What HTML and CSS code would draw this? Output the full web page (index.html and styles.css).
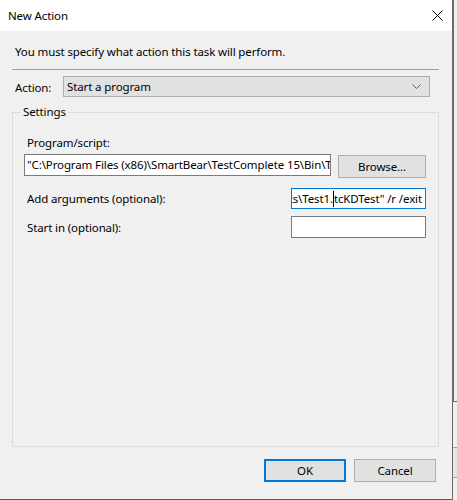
FILE: index.html
```html
<!DOCTYPE html>
<html>
<head>
<meta charset="utf-8">
<link rel="stylesheet" href="styles.css">
</head>
<body>
<div class="screen">
  <div class="window">
    <div class="titlebar">
      <span class="title">New Action</span>
      <svg class="close" width="11" height="11" viewBox="0 0 11 11"><path d="M0.5 0.5 L10.5 10.5 M10.5 0.5 L0.5 10.5" stroke="#000" stroke-width="1" fill="none"/></svg>
    </div>
    <div class="content">
      <div class="intro">You must specify what action this task will perform.</div>
      <div class="sep"></div>
      <div class="action-row">
        <span class="action-label">Action:</span>
        <div class="select">
          <span>Start a program</span>
          <svg class="chev" width="9" height="5" viewBox="0 0 9 5"><path d="M0.5 0.5 L4.5 4.5 L8.5 0.5" stroke="#606060" stroke-width="1" fill="none"/></svg>
        </div>
      </div>
      <fieldset class="group">
        <legend class="legend">Settings</legend>
        <div class="field-label">Program/script:</div>
        <div class="prog-row">
          <div class="input prog">"C:\Program Files (x86)\SmartBear\TestComplete 15\Bin\TestComplete.exe"</div>
          <div class="btn browse">Browse...</div>
        </div>
        <div class="row args-row">
          <span class="row-label">Add arguments (optional):</span>
          <div class="input focused"><span>"C:\Projects\KeywordTests\Test1.</span><span class="caret"></span><span>tcKDTest" /r /exit</span></div>
        </div>
        <div class="row start-row">
          <span class="row-label">Start in (optional):</span>
          <div class="input"></div>
        </div>
      </fieldset>
      <div class="buttons">
        <div class="btn default">OK</div>
        <div class="btn">Cancel</div>
      </div>
    </div>
  </div>
  <div class="edge"></div>
  <div class="behind">
    <div class="behind-top"></div>
    <div class="behind-mid"></div>
    <div class="behind-line"></div>
    <div class="behind-gap"></div>
    <div class="behind-line"></div>
  </div>
</div>
</body>
</html>
```
FILE: styles.css
```css
* { box-sizing: border-box; }
html, body { margin: 0; padding: 0; }
body {
  font-family: "Noto Sans", "Open Sans", sans-serif;
  font-size: 11.5px;
  letter-spacing: -0.12px;
  color: #000;
  background: #f0f0f0;
}
.screen {
  display: flex;
  width: 457px;
  height: 500px;
  overflow: hidden;
}
.window {
  width: 452px;
  height: 500px;
  background: #f0f0f0;
  border-bottom: 1px solid #5a5a5a;
  display: flex;
  flex-direction: column;
}
.edge {
  width: 1px;
  height: 500px;
  background: #6a6a6a;
}
.behind {
  flex: 1;
  background: #f0f0f0;
  display: flex;
  flex-direction: column;
}
.behind-top {
  height: 402px;
  border-left: 1px solid #6a6a6a;
  border-bottom: 1px solid #6a6a6a;
}
.behind-mid { height: 45px; background: #f0f0f0; }
.behind-line { height: 1px; background: #a0a0a0; }
.behind-gap { height: 29px; background: #e6e6e6; }

.titlebar {
  height: 31px;
  background: #fff;
  display: flex;
  align-items: center;
  justify-content: space-between;
  padding-left: 8px;
  padding-right: 9px;
  flex-shrink: 0;
}
.close { display: block; }

.content {
  flex: 1;
  display: flex;
  flex-direction: column;
  padding: 0 13px 0 12px;
}
.intro {
  margin-top: 13px;
  padding-left: 3px;
  line-height: 16px;
}
.sep {
  margin-top: 9px;
  height: 1px;
  background: #a0a0a0;
}
.action-row {
  margin-top: 6px;
  display: flex;
  align-items: center;
}
.action-label {
  width: 51px;
  padding-left: 3px;
  padding-top: 1px;
}
.select {
  width: 367px;
  height: 21px;
  background: #e1e1e1;
  border: 1px solid #adadad;
  display: flex;
  align-items: center;
  justify-content: space-between;
  padding-left: 3px;
  padding-right: 8px;
}
.group {
  margin: 8px 0 0 0;
  padding: 0 0 0 11px;
  border: 1px solid #dcdcdc;
  height: 342px;
  min-width: 0;
}
.legend {
  padding: 0 2px;
  margin-left: -3px;
  line-height: 14px;
}
.field-label {
  margin-top: 16px;
  padding-left: 3px;
  line-height: 16px;
}
.prog-row {
  margin-top: 3px;
  display: flex;
  align-items: flex-start;
}
.input {
  height: 22px;
  background: #fff;
  border: 1px solid #7a7a7a;
  white-space: nowrap;
  overflow: hidden;
  line-height: 20px;
  padding-left: 2px;
}
.prog { width: 307px; }
.btn {
  height: 23px;
  background: #e1e1e1;
  border: 1px solid #adadad;
  display: flex;
  align-items: center;
  justify-content: center;
}
.browse {
  width: 88px;
  margin-left: 7px;
  margin-top: 1px;
}
.row {
  display: flex;
  align-items: center;
  justify-content: space-between;
  padding-right: 12px;
}
.row-label { padding-left: 3px; }
.row .input { width: 135px; }
.args-row { margin-top: 10px; }
.args-row .input { height: 21px; line-height: 19px; }
.start-row { margin-top: 7px; }
.focused {
  border-color: #0078d7;
  display: flex;
  justify-content: flex-end;
  padding-right: 3px;
  padding-left: 0;
}
.focused span { flex-shrink: 0; }
.caret {
  width: 1px;
  height: 16px;
  background: #000;
  align-self: center;
}
.buttons {
  margin-top: 12px;
  display: flex;
  justify-content: flex-end;
  gap: 8px;
  padding-right: 3px;
}
.buttons .btn { width: 82px; }
.default { border: 2px solid #0078d7; }
```
